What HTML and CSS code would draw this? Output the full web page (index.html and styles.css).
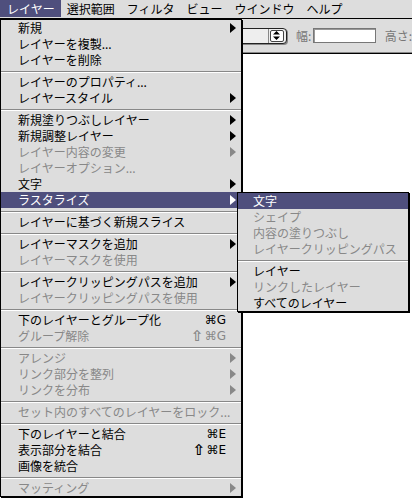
FILE: index.html
```html
<!DOCTYPE html>
<html lang="ja">

<head>
    <meta charset="UTF-8">
    <meta name="viewport" content="width=device-width, initial-scale=1.0">
    <title>レイヤー</title>
    <link rel="stylesheet" href="styles.css">
</head>

<body>
    <div class="screen">
        <div class="menubar">
            <span class="title active">レイヤー</span>
            <span class="title">選択範囲</span>
            <span class="title">フィルタ</span>
            <span class="title">ビュー</span>
            <span class="title">ウインドウ</span>
            <span class="title">ヘルプ</span>
        </div>

        <div class="optionsbar">
            <div class="popup">
                <span class="popup-body"></span>
                <span class="stepper">
                    <svg width="7" height="9" viewBox="0 0 7 9"><path d="M3.5 0 L7 3.5 H0 Z M0 5.5 H7 L3.5 9 Z" fill="#000"/></svg>
                </span>
            </div>
            <label class="field-label">幅:</label>
            <span class="field"></span>
            <label class="field-label">高さ:</label>
        </div>

        <div class="canvas"></div>

        <!-- layer menu -->
        <ul class="menu main">
            <li class="item has-sub">新規</li>
            <li class="item">レイヤーを複製...</li>
            <li class="item">レイヤーを削除</li>
            <li class="sep"></li>
            <li class="item">レイヤーのプロパティ...</li>
            <li class="item has-sub">レイヤースタイル</li>
            <li class="sep"></li>
            <li class="item has-sub">新規塗りつぶしレイヤー</li>
            <li class="item has-sub">新規調整レイヤー</li>
            <li class="item off has-sub">レイヤー内容の変更</li>
            <li class="item off">レイヤーオプション...</li>
            <li class="item has-sub">文字</li>
            <li class="item has-sub selected">ラスタライズ</li>
            <li class="sep"></li>
            <li class="item">レイヤーに基づく新規スライス</li>
            <li class="sep"></li>
            <li class="item has-sub">レイヤーマスクを追加</li>
            <li class="item off">レイヤーマスクを使用</li>
            <li class="sep"></li>
            <li class="item has-sub">レイヤークリッピングパスを追加</li>
            <li class="item off">レイヤークリッピングパスを使用</li>
            <li class="sep"></li>
            <li class="item">下のレイヤーとグループ化<span class="key">⌘G</span></li>
            <li class="item off">グループ解除<span class="key"><span class="shift">⇧</span>⌘G</span></li>
            <li class="sep"></li>
            <li class="item off has-sub">アレンジ</li>
            <li class="item off has-sub">リンク部分を整列</li>
            <li class="item off has-sub">リンクを分布</li>
            <li class="sep"></li>
            <li class="item off">セット内のすべてのレイヤーをロック...</li>
            <li class="sep"></li>
            <li class="item">下のレイヤーと結合<span class="key">⌘E</span></li>
            <li class="item">表示部分を結合<span class="key"><span class="shift">⇧</span>⌘E</span></li>
            <li class="item">画像を統合</li>
            <li class="sep"></li>
            <li class="item off has-sub">マッティング</li>
        </ul>

        <!-- rasterize submenu -->
        <ul class="menu sub">
            <li class="item selected">文字</li>
            <li class="item off">シェイプ</li>
            <li class="item off">内容の塗りつぶし</li>
            <li class="item off">レイヤークリッピングパス</li>
            <li class="sep"></li>
            <li class="item">レイヤー</li>
            <li class="item off">リンクしたレイヤー</li>
            <li class="item">すべてのレイヤー</li>
        </ul>
    </div>
</body>

</html>
```

FILE: styles.css
```css
body {
    margin: 0;
    padding: 0;
    font-family: "Noto Sans CJK JP", "DejaVu Sans", sans-serif;
    font-size: 12px;
    color: #000;
    background-color: #fff;
}

.screen {
    position: relative;
    width: 412px;
    height: 498px;
    overflow: hidden;
    background-color: #fff;
}

/* menu bar */
.menubar {
    display: flex;
    height: 18px;
    background-color: #dddddd;
    border-bottom: 1px solid #000;
}

.title {
    height: 17px;
    line-height: 17px;
    padding: 0 6px;
    white-space: nowrap;
}

.title.active {
    padding-left: 7px;
    background-color: #4f4f7d;
    color: #fff;
}

/* tool options bar */
.optionsbar {
    display: flex;
    align-items: center;
    height: 33px;
    padding-left: 180px;
    background-color: #dddddd;
    border-bottom: 1px solid #888;
    box-shadow: 0 1px 0 #000;
}

.popup {
    display: flex;
    width: 108px;
    height: 16px;
    box-sizing: border-box;
    border: 1px solid #222;
    border-radius: 0 4px 4px 0;
    background-color: #eeeeee;
    box-shadow: 1px 1px 0 #888;
}

.popup-body {
    flex: 1;
    border-right: 1px solid #888;
}

.stepper {
    display: flex;
    align-items: center;
    justify-content: center;
    width: 12px;
    margin: 1px 2px 1px 1px;
    background-color: #fff;
    border: 1px solid #444;
    border-radius: 2px;
}

.field-label {
    color: #777;
    margin-left: 9px;
    white-space: nowrap;
}

.field {
    width: 63px;
    height: 15px;
    box-sizing: border-box;
    margin-left: 2px;
    background-color: #fff;
    border: 1px solid #777;
    box-shadow: inset 1px 1px 0 #999;
}

.canvas {
    flex: 1;
}

/* drop-down menus */
.menu {
    position: absolute;
    margin: 0;
    padding: 0;
    list-style: none;
    box-sizing: border-box;
    background-color: #dddddd;
    border: 1px solid #000;
    box-shadow: 1px 1px 0 #000;
}

.menu.main {
    top: 19px;
    left: 0;
    width: 242px;
}

.menu.sub {
    top: 192px;
    left: 237px;
    width: 172px;
}

.item {
    display: flex;
    align-items: center;
    height: 16px;
    line-height: 16px;
    padding: 0 5px 0 17px;
    white-space: nowrap;
}

.menu.sub .item {
    padding-left: 15px;
}

.item.off {
    color: #888888;
}

.item.selected {
    background-color: #4f4f7d;
    color: #fff;
}

.main .item::after {
    content: "";
    width: 0;
    height: 0;
    margin-left: auto;
    border-left: 6px solid transparent;
    border-top: 5px solid transparent;
    border-bottom: 5px solid transparent;
}

.main .item.has-sub::after {
    border-left-color: currentColor;
}

.main .item:has(.key)::after {
    margin-left: 0;
}

.key {
    display: flex;
    align-items: center;
    margin-left: auto;
    margin-right: 4px;
    font-family: "DejaVu Sans", "Noto Sans CJK JP", sans-serif;
    font-size: 12px;
}

.shift {
    font-size: 15px;
    font-weight: bold;
    margin-right: 1px;
}

.sep {
    height: 0;
    margin: 3px 0 1px;
    border-top: 1px solid #888;
    border-bottom: 1px solid #fff;
}
```
